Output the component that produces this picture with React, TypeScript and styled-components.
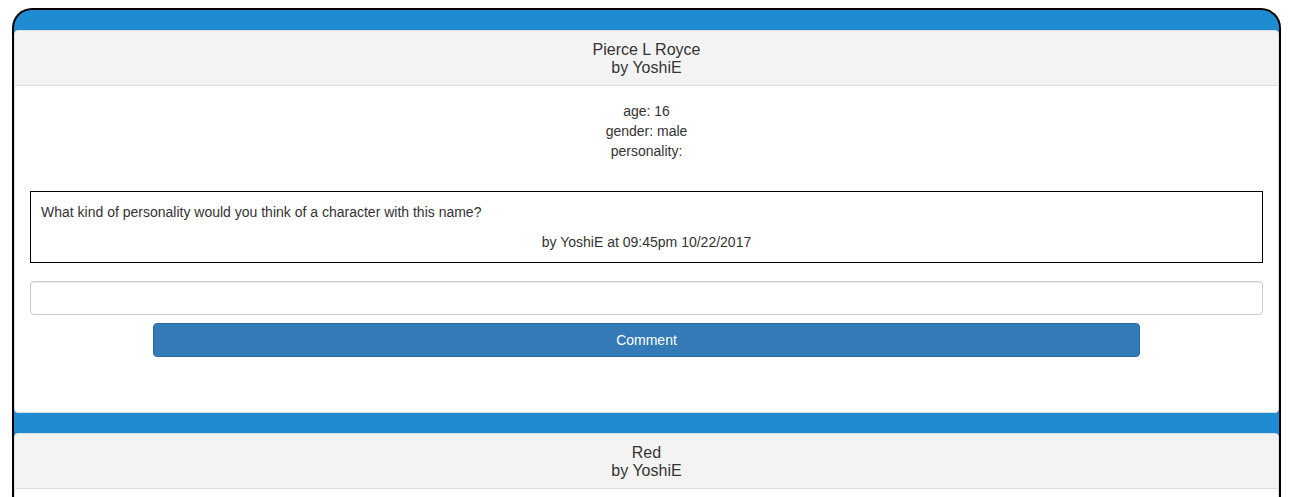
import React from "react";
import styled, { createGlobalStyle } from "styled-components";

const Global = createGlobalStyle`
  html, body { margin: 0; padding: 0; background: #fff; }
  body { font-family: "Liberation Sans", Arial, sans-serif; font-size: 14px; line-height: 20px; color: #333; overflow: hidden; }
  * { box-sizing: border-box; }
`;

const Frame = styled.div`
  margin: 8px 0 0 12px;
  width: 1269px;
  border: 2px solid #000;
  border-bottom: none;
  border-radius: 20px 20px 0 0;
  background: #1e8bd3;
  padding-top: 20px;
  display: flex;
  flex-direction: column;
  gap: 20px;
  min-height: 600px;
`;

const Panel = styled.section`
  background: #fff;
  border: 1px solid #ddd;
  border-radius: 4px;
`;

const Heading = styled.header`
  background: #f3f3f3;
  border-bottom: 1px solid #ddd;
  border-radius: 3px 3px 0 0;
  padding: 10px 15px 9px;
  text-align: center;
  font-size: 16px;
  line-height: 17.5px;
`;

const Body = styled.div`
  padding: 15px 15px 55px;
  display: flex;
  flex-direction: column;
  align-items: stretch;
`;

const Info = styled.div`
  text-align: center;
  margin-bottom: 30px;
`;

const Post = styled.div`
  border: 1px solid #000;
  padding: 10px;
`;

const Byline = styled.div`
  margin-top: 10px;
  text-align: center;
`;

const Input = styled.input`
  margin-top: 18px;
  height: 34px;
  border: 1px solid #ccc;
  border-radius: 4px;
  padding: 6px 12px;
  font: inherit;
  box-shadow: inset 0 1px 1px rgba(0, 0, 0, 0.075);
  outline: none;
`;

const Button = styled.button`
  margin: 8px auto 0;
  width: 80%;
  height: 34px;
  background: #337ab7;
  border: 1px solid #2e6da4;
  border-radius: 4px;
  color: #fff;
  font: inherit;
  cursor: pointer;
`;

type Entry = {
  name: string;
  author: string;
  age: string;
  gender: string;
  personality: string;
  question: string;
  time: string;
};

const entries: Entry[] = [
  {
    name: "Pierce L Royce",
    author: "YoshiE",
    age: "16",
    gender: "male",
    personality: "",
    question: "What kind of personality would you think of a character with this name?",
    time: "09:45pm 10/22/2017",
  },
  {
    name: "Red",
    author: "YoshiE",
    age: "",
    gender: "",
    personality: "",
    question: "",
    time: "",
  },
];

function CharacterPanel({ e }: { e: Entry }) {
  return (
    <Panel>
      <Heading>
        {e.name}
        <br />
        by {e.author}
      </Heading>
      <Body>
        <Info>
          age: {e.age}
          <br />
          gender: {e.gender}
          <br />
          personality: {e.personality}
        </Info>
        <Post>
          {e.question}
          <Byline>
            by {e.author} at {e.time}
          </Byline>
        </Post>
        <Input type="text" />
        <Button>Comment</Button>
      </Body>
    </Panel>
  );
}

export default function App() {
  return (
    <>
      <Global />
      <Frame>
        {entries.map((e, i) => (
          <CharacterPanel key={i} e={e} />
        ))}
      </Frame>
    </>
  );
}
